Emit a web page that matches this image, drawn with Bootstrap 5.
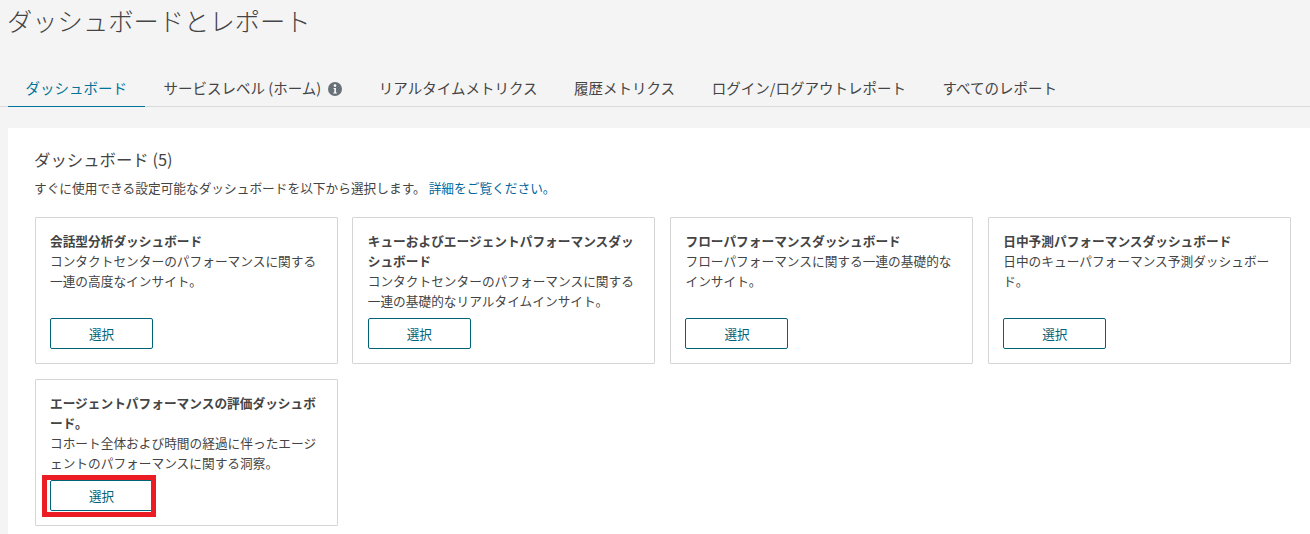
<!DOCTYPE html>
<html lang="ja">
<head>
<meta charset="utf-8">
<title>ダッシュボードとレポート</title>
<link href="https://cdn.jsdelivr.net/npm/bootstrap@5.3.0/dist/css/bootstrap.min.css" rel="stylesheet">
<style>
html,body{height:534px;overflow:hidden}
body{background:#f4f4f4;color:#444;font-family:"Noto Sans CJK JP","Liberation Sans",sans-serif;font-size:13px;padding-left:8px}
.page-title{font-size:25.3px;font-weight:300;line-height:40px;margin:0 0 0 -1px;height:40px;color:#444}
.tab-bar{margin-top:31px;height:36px;border-bottom:1px solid #d9d9d9;margin-left:-8px;padding-left:8px;display:flex}
.tab-link{display:block;padding:0 17.5px;line-height:33px;height:36px;font-size:14.5px;color:#444;text-decoration:none;margin-right:1.6px;white-space:nowrap}
.tab-link.on{color:#00749a;border-bottom:1px solid #00749a}
.info-ico{width:14px;height:14px;vertical-align:-2px;margin-left:7px}
.panel-main{background:#fff;margin-top:21px;padding:20px 19px 0 26px;height:410px}
.panel-head{font-size:16.4px;line-height:22px;margin:0;font-weight:400;color:#444}
.panel-sub{font-size:12.7px;line-height:18px;margin:9px 0 0}
.panel-sub a{color:#00689d;text-decoration:none}
.dash-grid{display:grid;grid-template-columns:repeat(4,303px);gap:15px 14.75px;margin-top:20px;margin-left:.6px}
.dash-card{height:147px;border:1px solid #d5d5d5;border-radius:1px;padding:12.7px 14px 14px 14.4px;display:flex;flex-direction:column;background:#fff}
.dash-name{font-weight:700;font-size:12.7px;line-height:20.2px;color:#444}
.dash-desc{font-size:12.7px;line-height:20.2px;color:#444}
.pick-wrap{margin-top:auto;position:relative;width:103px}
.pick-btn{display:block;width:103px;height:31px;padding:0;font-size:12.6px;line-height:27px;border:1px solid #006378;border-radius:2px;color:#006378;background:#fff}
.pick-btn:hover{background:#fff;color:#006378;border-color:#006378}
.call-out{position:absolute;left:-8px;top:-5px;width:114px;height:42px;border:5px solid #ec1c24;pointer-events:none}
</style>
</head>
<body>
<h1 class="page-title">ダッシュボードとレポート</h1>
<nav class="tab-bar">
<a class="tab-link on" href="#">ダッシュボード</a>
<a class="tab-link" href="#">サービスレベル (ホーム)<svg class="info-ico" viewBox="0 0 14 14"><circle cx="7" cy="7" r="7" fill="#687078"/><circle cx="7" cy="3.6" r="1.3" fill="#fff"/><path d="M5.6 6h2.3v4.4h.9v1.1H5.3v-1.1h1V7.1h-.7z" fill="#fff"/></svg></a>
<a class="tab-link" href="#">リアルタイムメトリクス</a>
<a class="tab-link" href="#">履歴メトリクス</a>
<a class="tab-link" href="#">ログイン/ログアウトレポート</a>
<a class="tab-link" href="#">すべてのレポート</a>
</nav>
<main class="panel-main">
<h2 class="panel-head">ダッシュボード (5)</h2>
<p class="panel-sub">すぐに使用できる設定可能なダッシュボードを以下から選択します。 <a href="#">詳細をご覧ください。</a></p>
<div class="dash-grid">
<div class="dash-card"><div class="dash-name">会話型分析ダッシュボード</div><div class="dash-desc">コンタクトセンターのパフォーマンスに関する一連の高度なインサイト。</div><div class="pick-wrap"><button class="btn pick-btn">選択</button></div></div>
<div class="dash-card"><div class="dash-name">キューおよびエージェントパフォーマンスダッシュボード</div><div class="dash-desc">コンタクトセンターのパフォーマンスに関する一連の基礎的なリアルタイムインサイト。</div><div class="pick-wrap"><button class="btn pick-btn">選択</button></div></div>
<div class="dash-card"><div class="dash-name">フローパフォーマンスダッシュボード</div><div class="dash-desc">フローパフォーマンスに関する一連の基礎的なインサイト。</div><div class="pick-wrap"><button class="btn pick-btn">選択</button></div></div>
<div class="dash-card"><div class="dash-name">日中予測パフォーマンスダッシュボード</div><div class="dash-desc">日中のキューパフォーマンス予測ダッシュボード。</div><div class="pick-wrap"><button class="btn pick-btn">選択</button></div></div>
<div class="dash-card"><div class="dash-name">エージェントパフォーマンスの評価ダッシュボード。</div><div class="dash-desc">コホート全体および時間の経過に伴ったエージェントのパフォーマンスに関する洞察。</div><div class="pick-wrap"><button class="btn pick-btn">選択</button><span class="call-out"></span></div></div>
</div>
</main>
<script src="https://cdn.jsdelivr.net/npm/bootstrap@5.3.0/dist/js/bootstrap.bundle.min.js"></script>
</body>
</html>
